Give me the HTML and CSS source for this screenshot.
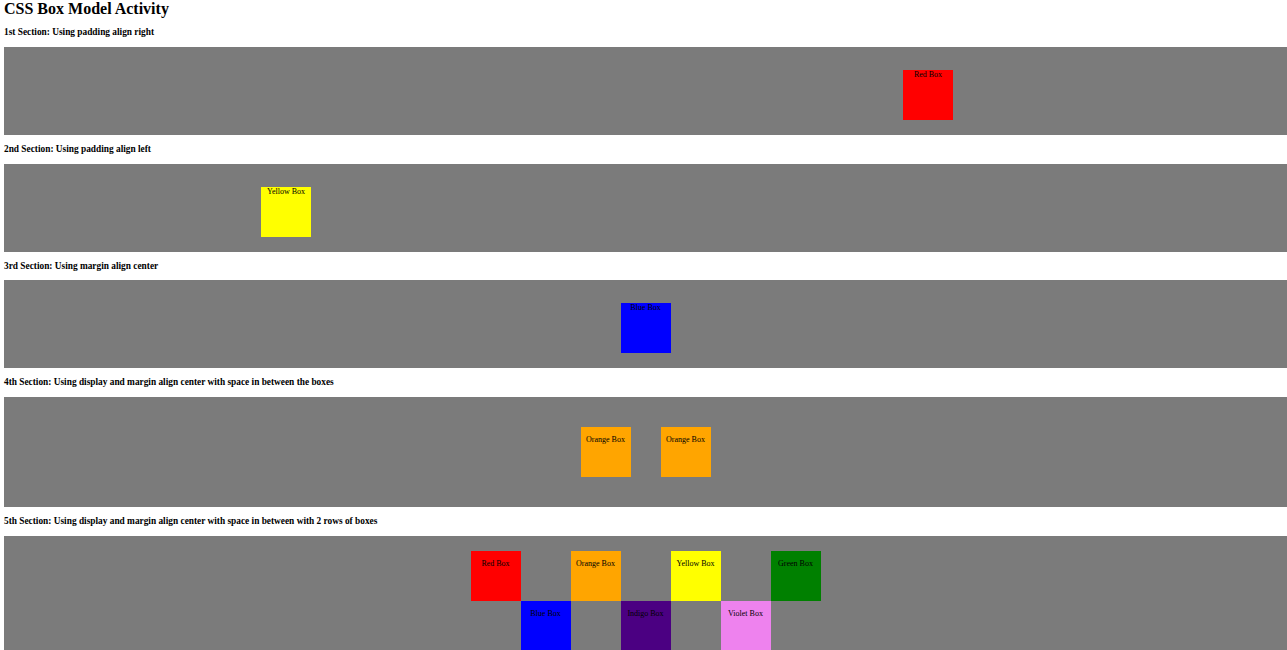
FILE: index.html
```html
<!DOCTYPE html>
<html>
<head>
<meta charset="utf-8">
<title>CSS Box Model Activity</title>
<link rel="stylesheet" href="styles.css">
</head>
<body>
<h1 class="title">CSS Box Model Activity</h1>

<p class="label">1st Section: Using padding align right</p>
<div class="section s1">
  <div class="box red"><p class="box-text">Red Box</p></div>
</div>

<p class="label">2nd Section: Using padding align left</p>
<div class="section s2">
  <div class="box yellow"><p class="box-text">Yellow Box</p></div>
</div>

<p class="label">3rd Section: Using margin align center</p>
<div class="section s3">
  <div class="box blue"><p class="box-text">Blue Box</p></div>
</div>

<p class="label">4th Section: Using display and margin align center with space in between the boxes</p>
<div class="section s4">
  <div class="box orange"><p class="box-text low">Orange Box</p></div>
  <div class="box orange"><p class="box-text low">Orange Box</p></div>
</div>

<p class="label">5th Section: Using display and margin align center with space in between with 2 rows of boxes</p>
<div class="section s5">
  <div class="row row1">
    <div class="box red"><p class="box-text low">Red Box</p></div>
    <div class="box orange"><p class="box-text low">Orange Box</p></div>
    <div class="box yellow"><p class="box-text low">Yellow Box</p></div>
    <div class="box green"><p class="box-text low">Green Box</p></div>
  </div>
  <div class="row row2">
    <div class="box blue"><p class="box-text low">Blue Box</p></div>
    <div class="box indigo"><p class="box-text low">Indigo Box</p></div>
    <div class="box violet"><p class="box-text low">Violet Box</p></div>
  </div>
</div>
</body>
</html>
```

FILE: styles.css
```css
html, body {
  margin: 0;
  padding: 0;
}
body {
  padding-left: 4px;
  font-family: "Liberation Serif", "Times New Roman", serif;
  color: #000;
  background: #fff;
  overflow: hidden;
}
.title {
  margin: 0;
  font-size: 16px;
  line-height: 18px;
  font-weight: bold;
}
.label {
  margin: 9px 0 8.75px 0;
  font-size: 7pt;
  line-height: 11px;
  font-weight: bold;
}
.section {
  background: #7b7b7b;
  display: flex;
}
.s1 {
  padding: 23px 0 15px 899px;
}
.s2 {
  padding: 23px 0 15px 257px;
}
.s3 {
  padding: 23px 0 15px 0;
  justify-content: center;
}
.s4 {
  padding: 30px 0;
  justify-content: center;
  gap: 30px;
}
.s5 {
  padding: 15px 0 15px 0;
  flex-direction: column;
  align-items: center;
}
.row {
  display: flex;
  gap: 50px;
}
.box {
  width: 50px;
  height: 50px;
  flex: none;
}
.box-text {
  margin: 0;
  padding-top: 0;
  font-size: 8px;
  line-height: 9px;
  text-align: center;
}
.box-text.low {
  padding-top: 8px;
}
.red { background: #ff0000; }
.yellow { background: #ffff00; }
.blue { background: #0000ff; }
.orange { background: #ffa500; }
.green { background: #008000; }
.indigo { background: #4b0082; }
.violet { background: #ee82ee; }
```
